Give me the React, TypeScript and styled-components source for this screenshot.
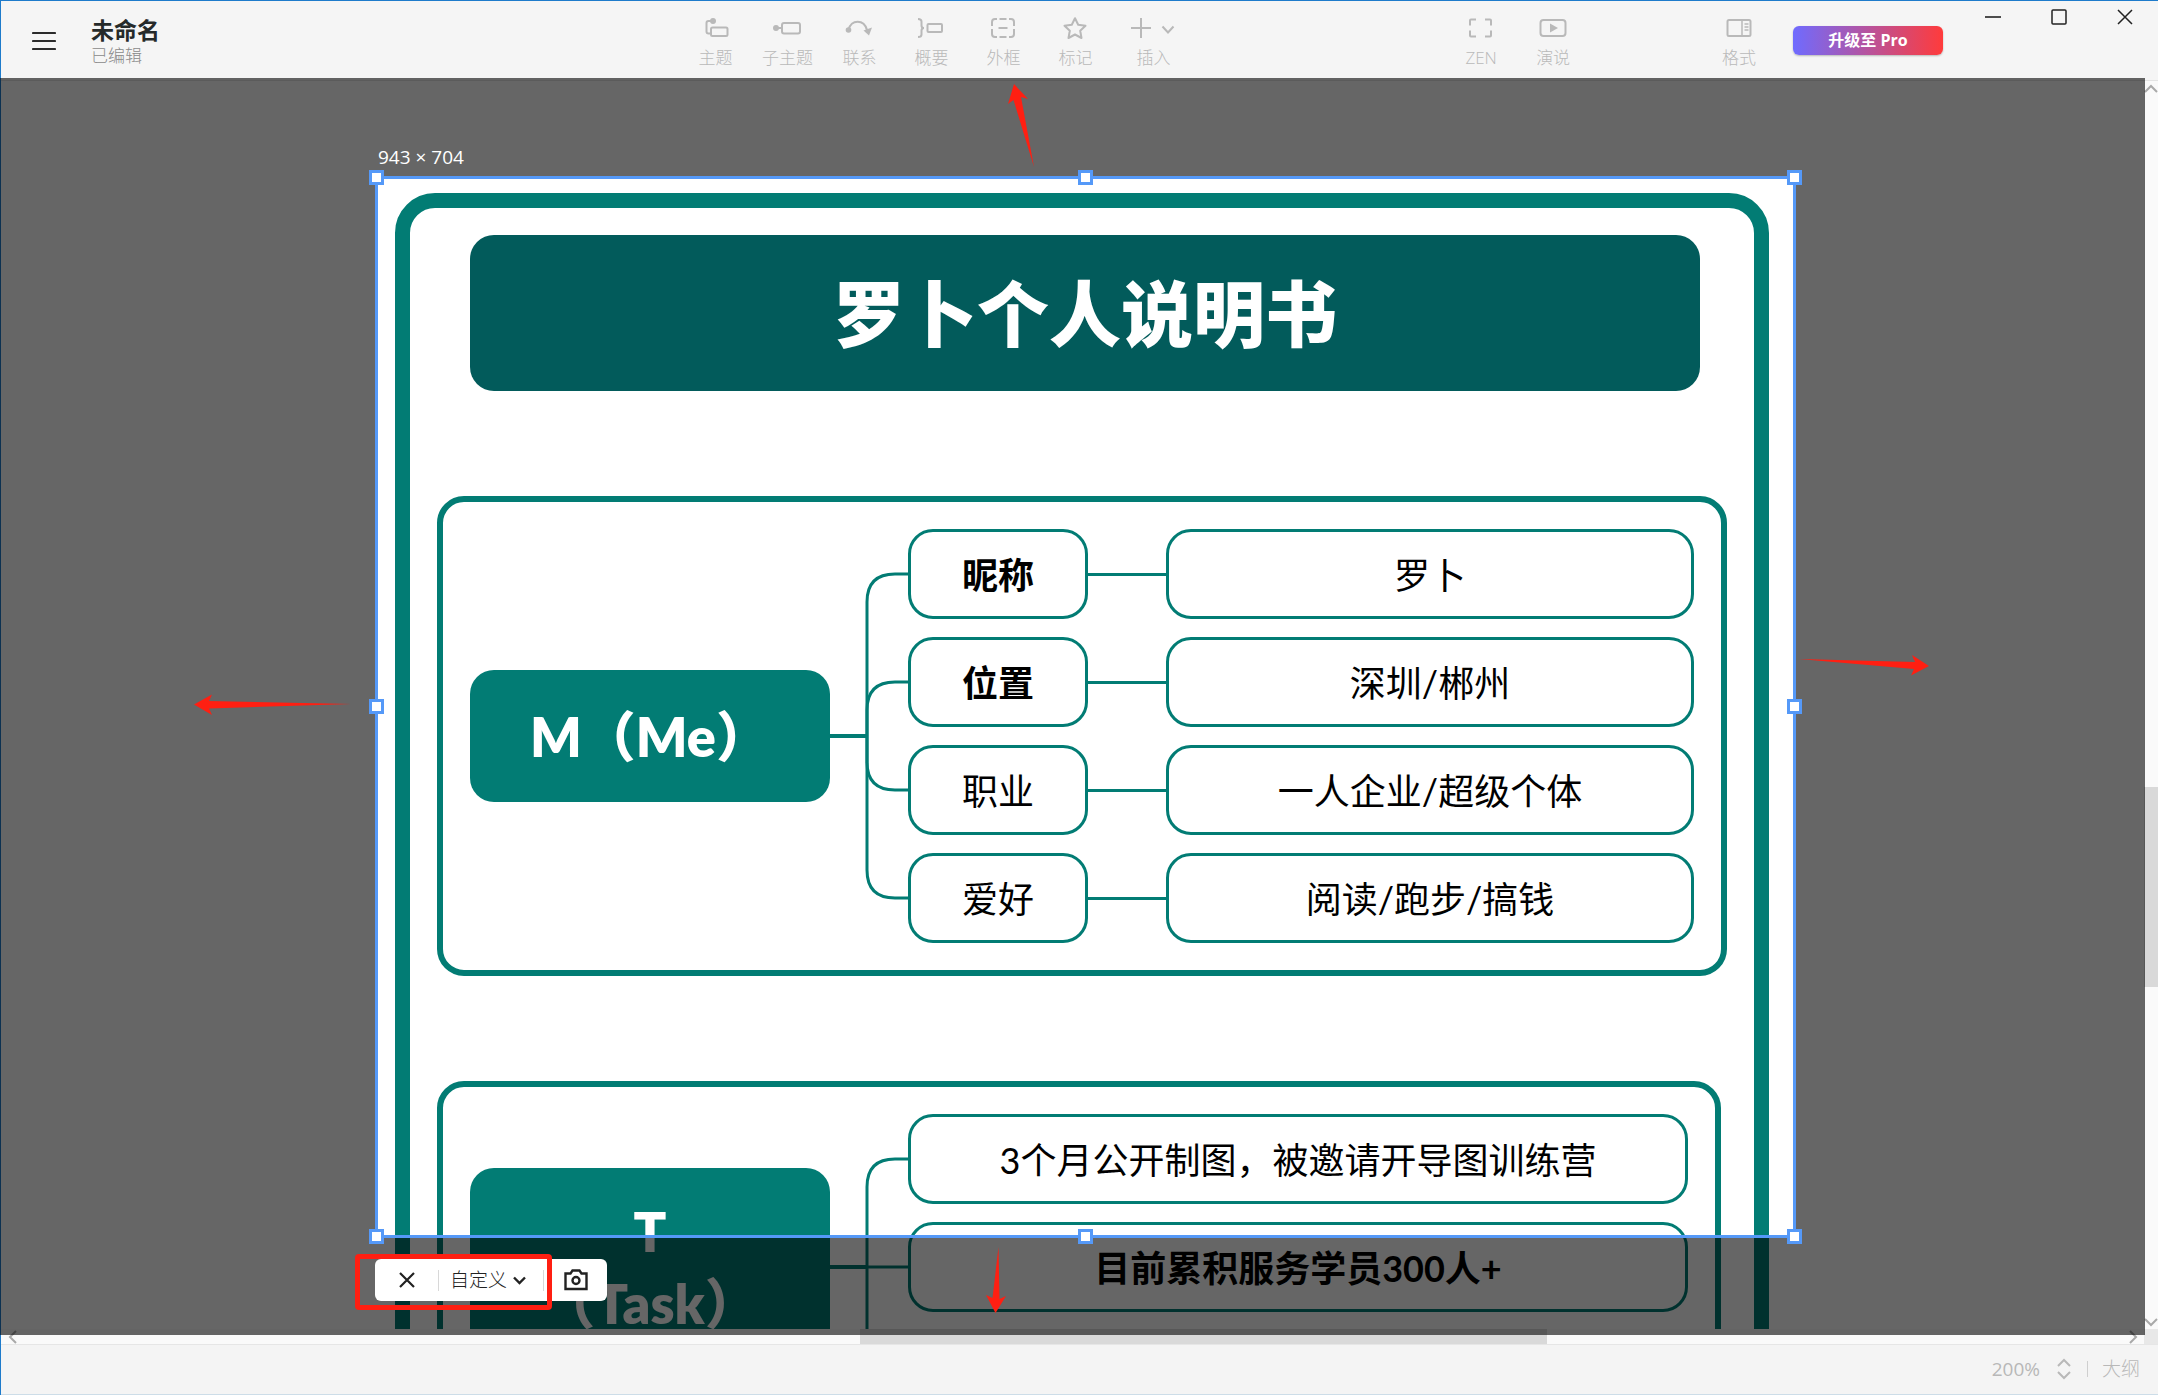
import React from "react";
import styled, { createGlobalStyle, css } from "styled-components";

const TEAL = "#027c74";
const RED = "#ff1f12";
const UI_FONT = `"Open Sans", "Noto Sans", "Noto Sans CJK SC", sans-serif`;
const MAP_FONT = `Lato, "Noto Sans CJK SC", sans-serif`;

const GlobalStyle = createGlobalStyle`
  * { box-sizing: border-box; }
  body { margin: 0; background: #f5f5f5; font-family: ${UI_FONT}; }
  button, select { font: inherit; color: inherit; margin: 0; padding: 0; border: 0; background: none; }
`;

const Window = styled.div`
  position: relative;
  display: flex;
  flex-direction: column;
  height: 100vh;
  overflow: hidden;
  background: #f5f5f5;
  &::before {
    content: "";
    position: absolute;
    inset: 0 auto 0 0;
    width: 1px;
    background: #1e7bcb;
    z-index: 1;
  }
`;

/* ---------- header ---------- */

const Header = styled.header`
  display: flex;
  height: 81px;
  flex: none;
  border-top: 1px solid #1e7bcb;
  border-bottom: 1px solid #e4e4e4;
`;

const MenuButton = styled.button`
  width: 24px;
  height: 24px;
  margin: 28px 35px 0 32px;
  color: #2b2b2b;
  svg { display: block; }
`;

const Document = styled.div`
  padding-top: 15px;
  white-space: nowrap;
`;

const DocumentName = styled.h1`
  margin: 0;
  font-size: 23px;
  line-height: 28px;
  font-weight: 700;
  color: #262a2a;
`;

const DocumentState = styled.div`
  font-size: 17px;
  line-height: 24px;
  font-weight: 300;
  color: #8a8a8a;
`;

const Spacer = styled.div<{ $grow: number }>`
  flex: ${(p) => p.$grow} 1 0;
`;

const ToolGroup = styled.div`
  display: flex;
`;

const Tool = styled.button<{ $wide?: boolean }>`
  display: flex;
  flex-direction: column;
  align-items: center;
  width: ${(p) => (p.$wide ? 84 : 72)}px;
  padding-top: 15px;
  gap: 7px;
  font-size: 17px;
  line-height: 22px;
  font-weight: 300;
  color: #b9b9b9;
  white-space: nowrap;
  svg { display: block; height: 24px; }
`;

const ProButton = styled.button`
  width: 150px;
  height: 29px;
  margin: 25px 17px 0 18px;
  border-radius: 6px;
  background: linear-gradient(90deg, #6f6bff, #ff3b3b);
  box-shadow: 0 1px 2px rgba(0, 0, 0, 0.25);
  color: #fff;
  font-size: 16px;
  line-height: 29px;
  font-weight: 700;
`;

const WindowButton = styled.button`
  display: grid;
  place-items: center;
  width: 66px;
  height: 32px;
  color: #222;
`;

/* ---------- work area ---------- */

const WorkArea = styled.main`
  position: relative;
  flex: 1;
  min-height: 0;
  display: grid;
  grid-template: minmax(0, 1fr) 15px / minmax(0, 1fr) 14px;
  background: #e8e8e8;
`;

const Canvas = styled.div`
  position: relative;
  overflow: hidden;
  background: #fff;
`;

const scrollbar = css`
  display: flex;
  align-items: center;
  justify-content: space-between;
  background: #fafafa;
  color: #a9a9a9;
  svg { display: block; flex: none; }
`;

const VerticalBar = styled.div`
  ${scrollbar}
  flex-direction: column;
  padding: 3px 0 2px;
`;

const HorizontalBar = styled.div`
  ${scrollbar}
  padding: 0 6px 0 8px;
`;

const Track = styled.div<{ $vertical?: boolean }>`
  flex: 1;
  align-self: stretch;
  display: flex;
  flex-direction: ${(p) => (p.$vertical ? "column" : "row")};
`;

const Thumb = styled.div`
  background: #d9d9d9;
`;

/* ---------- mind map ---------- */

const MapFrame = styled.section`
  position: absolute;
  left: 395px;
  top: 112px;
  display: flex;
  flex-direction: column;
  align-items: flex-start;
  gap: 105px;
  padding: 27px;
  border: 15px solid ${TEAL};
  border-radius: 40px;
  font-family: ${MAP_FONT};
  color: #000;
`;

const MapTitle = styled.h2`
  display: grid;
  place-items: center;
  align-self: stretch;
  height: 156px;
  margin: 0 27px 0 33px;
  border-radius: 24px;
  background: #025b5b;
  color: #fff;
  font-size: 72px;
  line-height: 104px;
  font-weight: 900;
`;

const Boundary = styled.div`
  display: flex;
  align-items: center;
  padding: 27px;
  border: 6px solid ${TEAL};
  border-radius: 27px;
`;

const MainTopic = styled.div`
  display: flex;
  flex-direction: column;
  align-items: center;
  justify-content: center;
  width: 360px;
  min-height: 132px;
  padding: 28px 0 26px;
  border-radius: 24px;
  background: ${TEAL};
  color: #fff;
  font-size: 54px;
  line-height: 72px;
  font-weight: 800;
  white-space: nowrap;
`;

const Branches = styled.div`
  display: flex;
  flex-direction: column;
  gap: 18px;
`;

const Branch = styled.div`
  display: flex;
  align-items: center;
`;

const Link = styled.div`
  width: 78px;
  height: 3px;
  background: ${TEAL};
`;

const Topic = styled.div<{ $width: number; $bold?: boolean }>`
  display: grid;
  place-items: center;
  width: ${(p) => p.$width}px;
  height: 90px;
  padding-top: 2px;
  border: 3px solid ${TEAL};
  border-radius: 25px;
  font-size: 36px;
  line-height: 52px;
  font-weight: ${(p) => (p.$bold ? 700 : 400)};
  white-space: nowrap;
`;

/* ---------- capture overlay ---------- */

const Shade = styled.div`
  position: absolute;
  inset: -3px 13px 9px 0;
  overflow: hidden;
  z-index: 2;
`;

const Selection = styled.div`
  position: absolute;
  left: 375px;
  top: 98px;
  width: 1421px;
  height: 1062px;
  border: 3px solid #5599f8;
  box-shadow: 0 0 0 4000px rgba(0, 0, 0, 0.6);
`;

const SizeLabel = styled.div`
  position: absolute;
  left: 0;
  bottom: calc(100% + 9px);
  color: #fff;
  font-size: 19px;
  line-height: 26px;
  white-space: nowrap;
`;

const Handle = styled.span<{ $x: number; $y: number }>`
  position: absolute;
  left: ${(p) => p.$x}%;
  top: ${(p) => p.$y}%;
  width: 15px;
  height: 15px;
  margin: ${(p) => (p.$y === 0 ? -9 : p.$y === 100 ? -6 : -8)}px 0 0
    ${(p) => (p.$x === 0 ? -9 : p.$x === 100 ? -6 : -8)}px;
  border: 3px solid #5599f8;
  background: #fff;
`;

const CaptureBar = styled.div`
  position: absolute;
  left: 375px;
  top: 1181px;
  display: flex;
  align-items: center;
  height: 42px;
  border-radius: 6px;
  background: #fff;
  color: #222;
  font-size: 19px;
`;

const CaptureButton = styled.button`
  display: grid;
  place-items: center;
  width: 63px;
  height: 42px;
`;

const Divider = styled.span`
  width: 1px;
  height: 21px;
  background: #d8d8d8;
`;

const PresetField = styled.label`
  position: relative;
  display: flex;
  align-items: center;
  width: 104px;
  height: 42px;
  svg {
    position: absolute;
    right: 17px;
    pointer-events: none;
  }
`;

const PresetSelect = styled.select`
  appearance: none;
  width: 100%;
  height: 42px;
  padding-left: 11px;
  font-weight: 300;
`;

const Highlight = styled.div`
  position: absolute;
  left: 355px;
  top: 1176px;
  width: 197px;
  height: 56px;
  border: 5px solid ${RED};
  border-radius: 4px;
  pointer-events: none;
`;

const Annotations = styled.svg`
  position: absolute;
  inset: 0;
  width: 100%;
  height: 100%;
  pointer-events: none;
  fill: ${RED};
`;

/* ---------- status bar ---------- */

const StatusBar = styled.footer`
  display: flex;
  align-items: center;
  justify-content: flex-end;
  height: 51px;
  flex: none;
  padding: 0 18px 2px 0;
  border-top: 1px solid #e6e6e6;
  border-bottom: 1px solid #cddde8;
  background: #f4f4f4;
  color: #b8b8b8;
  font-size: 19px;
  line-height: 26px;
`;

const ZoomStepper = styled.button`
  width: 14px;
  height: 22px;
  margin: 0 16px 0 17px;
  svg { display: block; }
`;

const Rule = styled.span`
  width: 1px;
  height: 16px;
  margin-right: 14px;
  background: #cfcfcf;
`;

const OutlineButton = styled.button`
  font-weight: 300;
`;

const line = { fill: "none", stroke: "currentColor", strokeWidth: 2 } as const;

const tools = [
  {
    label: "主题",
    icon: (
      <svg width="28" height="24" viewBox="0 0 28 24" {...line}>
        <circle cx="12" cy="5" r="3" fill="currentColor" stroke="none" />
        <path d="M12 5H7.5Q5.5 5 5.5 7v8.5q0 2 2 2H10" />
        <rect x="10" y="11.5" width="16.5" height="8.5" rx="1.5" />
      </svg>
    ),
  },
  {
    label: "子主题",
    icon: (
      <svg width="28" height="24" viewBox="0 0 28 24" {...line}>
        <circle cx="3" cy="12" r="3" fill="currentColor" stroke="none" />
        <path d="M3 12h6" />
        <rect x="9" y="7" width="18" height="10.5" rx="2" />
      </svg>
    ),
  },
  {
    label: "联系",
    icon: (
      <svg width="28" height="24" viewBox="0 0 28 24" {...line}>
        <circle cx="3.5" cy="14" r="2.8" fill="currentColor" stroke="none" />
        <path d="M3.5 14C6 3 19 3 22 14" strokeWidth="2.2" />
        <path d="M27 11.5 18.5 14.5 24 19.5z" fill="currentColor" stroke="none" />
      </svg>
    ),
  },
  {
    label: "概要",
    icon: (
      <svg width="28" height="24" viewBox="0 0 28 24" {...line}>
        <path d="M1 3q3.500 0 3.500 2.500v4Q4.500 12 7 12q-2.500 0-2.500 2.500v4Q4.500 21 1 21" />
        <rect x="10.500" y="8" width="14.500" height="8" rx="1" />
      </svg>
    ),
  },
  {
    label: "外框",
    icon: (
      <svg width="28" height="24" viewBox="0 0 28 24" {...line}>
        <path d="M3 10V6q0-3 3-3h2M10.500 3h7M20 3h2q3 0 3 3v4M25 13v5q0 3-3 3h-2M17.500 21h-7M8 21H6q-3 0-3-3v-5M9.500 12h9" />
      </svg>
    ),
  },
  {
    label: "标记",
    icon: (
      <svg width="28" height="24" viewBox="0 0 28 24" {...line} strokeLinejoin="round">
        <path d="m14 2.200 3.200 6.600 7.300 1-5.300 5 1.300 7.200-6.500-3.500-6.500 3.500 1.300-7.200-5.300-5 7.300-1z" />
      </svg>
    ),
  },
  {
    label: "插入",
    wide: true,
    icon: (
      <svg width="44" height="24" viewBox="0 0 44 24" {...line}>
        <path d="M0 12h20M10 2v20M31.500 10.500l5.500 6 5.500-6" />
      </svg>
    ),
  },
];

const viewTools = [
  {
    label: "ZEN",
    icon: (
      <svg width="28" height="24" viewBox="0 0 28 24" {...line}>
        <path d="M3 9.500V4.500q0-1 1-1h5M18 3.500h5q1 0 1 1v5M24 14.500v5q0 1-1 1h-5M9 20.500H4q-1 0-1-1v-5" />
      </svg>
    ),
  },
  {
    label: "演说",
    icon: (
      <svg width="28" height="24" viewBox="0 0 28 24" {...line}>
        <rect x="1.500" y="4" width="25" height="16" rx="3" />
        <path d="M11 7.500v9l8-4.500z" fill="currentColor" stroke="none" />
      </svg>
    ),
  },
];

const profile = [
  { key: "昵称", value: "罗卜", bold: true },
  { key: "位置", value: "深圳/郴州", bold: true },
  { key: "职业", value: "一人企业/超级个体", bold: false },
  { key: "爱好", value: "阅读/跑步/搞钱", bold: false },
];

const tasks = [
  { text: "3个月公开制图，被邀请开导图训练营", bold: false },
  { text: "目前累积服务学员300人+", bold: true },
  { text: "", bold: false },
];

const handles: [number, number][] = [
  [0, 0], [50, 0], [100, 0], [0, 50], [100, 50], [0, 100], [50, 100], [100, 100],
];

/* Trunk from a main topic, fanning out to `count` branches of 90px with 18px gaps. */
function Connector({ count }: { count: number }) {
  const height = count * 108 - 18;
  const mid = height / 2;
  return (
    <svg width="78" height={height} fill="none" stroke={TEAL} strokeWidth="3">
      <path d={`M0 ${mid}H37`} strokeWidth="4" />
      {Array.from({ length: count }, (_, i) => {
        const y = 45 + i * 108;
        if (y === mid) return <path key={i} d={`M37 ${y}H78`} />;
        const bend = y < mid ? y + 28 : y - 28;
        return <path key={i} d={`M37 ${mid}V${bend}Q37 ${y} 65 ${y}H78`} />;
      })}
    </svg>
  );
}

const arrowPaths = { up: "M1 8l6-6 6 6", down: "M1 2l6 6 6-6", left: "M8 1L2 7l6 6", right: "M2 1l6 6-6 6" };

function ScrollArrow({ dir }: { dir: keyof typeof arrowPaths }) {
  const tall = dir === "left" || dir === "right";
  return (
    <svg width={tall ? 10 : 14} height={tall ? 14 : 10} {...line}>
      <path d={arrowPaths[dir]} />
    </svg>
  );
}

export default function App() {
  return (
    <Window>
      <GlobalStyle />
      <Header>
        <MenuButton aria-label="菜单">
          <svg width="24" height="24" {...line}>
            <path d="M1 4h22M1 12h22M1 20h22" strokeWidth="2.200" strokeLinecap="round" />
          </svg>
        </MenuButton>
        <Document>
          <DocumentName>未命名</DocumentName>
          <DocumentState>已编辑</DocumentState>
        </Document>
        <Spacer $grow={520} />
        <ToolGroup>
          {tools.map((t) => (
            <Tool key={t.label} $wide={t.wide}>
              {t.icon}
              {t.label}
            </Tool>
          ))}
        </ToolGroup>
        <Spacer $grow={250} />
        <ToolGroup>
          {viewTools.map((t) => (
            <Tool key={t.label}>
              {t.icon}
              {t.label}
            </Tool>
          ))}
        </ToolGroup>
        <Spacer $grow={114} />
        <Tool>
          <svg width="28" height="24" viewBox="0 0 28 24" {...line}>
            <rect x="2.500" y="4" width="23" height="16" rx="1.500" />
            <path d="M17 4v16M19.500 8h4M19.500 11h4M19.500 14h4" strokeWidth="1.500" />
          </svg>
          格式
        </Tool>
        <ProButton>升级至 Pro</ProButton>
        <WindowButton aria-label="最小化">
          <svg width="16" height="16" {...line}>
            <path d="M0 8h16" strokeWidth="1.600" />
          </svg>
        </WindowButton>
        <WindowButton aria-label="最大化">
          <svg width="16" height="16" {...line}>
            <rect x="1" y="1" width="14" height="14" rx="1" strokeWidth="1.500" />
          </svg>
        </WindowButton>
        <WindowButton aria-label="关闭">
          <svg width="16" height="16" {...line}>
            <path d="M1 1l14 14M15 1L1 15" strokeWidth="1.500" />
          </svg>
        </WindowButton>
      </Header>

      <WorkArea>
        <Canvas>
          <MapFrame>
            <MapTitle>罗卜个人说明书</MapTitle>
            <Boundary>
              <MainTopic>M（Me）</MainTopic>
              <Connector count={profile.length} />
              <Branches>
                {profile.map((p) => (
                  <Branch key={p.key}>
                    <Topic $width={180} $bold={p.bold}>{p.key}</Topic>
                    <Link />
                    <Topic $width={528}>{p.value}</Topic>
                  </Branch>
                ))}
              </Branches>
            </Boundary>
            <Boundary>
              <MainTopic>
                <span>T</span>
                <span>（Task）</span>
              </MainTopic>
              <Connector count={tasks.length} />
              <Branches>
                {tasks.map((t, i) => (
                  <Topic key={i} $width={780} $bold={t.bold}>{t.text}</Topic>
                ))}
              </Branches>
            </Boundary>
          </MapFrame>
        </Canvas>
        <VerticalBar>
          <ScrollArrow dir="up" />
          <Track $vertical>
            <Spacer $grow={693} />
            <Thumb style={{ flex: 200 }} />
            <Spacer $grow={330} />
          </Track>
          <ScrollArrow dir="down" />
        </VerticalBar>
        <HorizontalBar>
          <ScrollArrow dir="left" />
          <Track>
            <Spacer $grow={842} />
            <Thumb style={{ flex: 687 }} />
            <Spacer $grow={581} />
          </Track>
          <ScrollArrow dir="right" />
        </HorizontalBar>

        <Shade>
          <Selection>
            <SizeLabel>943 × 704</SizeLabel>
            {handles.map(([x, y]) => (
              <Handle key={`${x}-${y}`} $x={x} $y={y} />
            ))}
          </Selection>
          <CaptureBar>
            <CaptureButton aria-label="取消">
              <svg width="16" height="16" {...line}>
                <path d="M1 1l14 14M15 1L1 15" strokeWidth="2.200" />
              </svg>
            </CaptureButton>
            <Divider />
            <PresetField>
              <PresetSelect aria-label="尺寸" defaultValue="custom">
                <option value="custom">自定义</option>
              </PresetSelect>
              <svg width="13" height="9" {...line}>
                <path d="M1 1.500l5.500 5.500L12 1.500" strokeWidth="2.400" />
              </svg>
            </PresetField>
            <Divider />
            <CaptureButton aria-label="截图">
              <svg width="24" height="22" {...line} strokeWidth="2.400">
                <path d="M1.500 4.500h5l2-3h7l2 3h5v15.500h-21z" />
                <circle cx="12" cy="11.500" r="3.500" />
              </svg>
            </CaptureButton>
          </CaptureBar>
          <Highlight />
          <Annotations>
            <path d="M1014 6l14 15-7-2 13 70-20.500-67-5.500 4z" />
            <path d="M194 626.500l18-10-3 6.500 142 3-142 4.500 3 6.500z" />
            <path d="M1929 588l-17-11 3 7-116-3 115 10-3 6.500z" />
            <path d="M995.500 1235l10.500-17-6.500 3-1-52-6 51-6.500-3z" />
          </Annotations>
        </Shade>
      </WorkArea>

      <StatusBar>
        <span>200%</span>
        <ZoomStepper aria-label="缩放">
          <svg width="14" height="22" {...line}>
            <path d="M1 8l6-6 6 6M1 14l6 6 6-6" />
          </svg>
        </ZoomStepper>
        <Rule />
        <OutlineButton>大纲</OutlineButton>
      </StatusBar>
    </Window>
  );
}
